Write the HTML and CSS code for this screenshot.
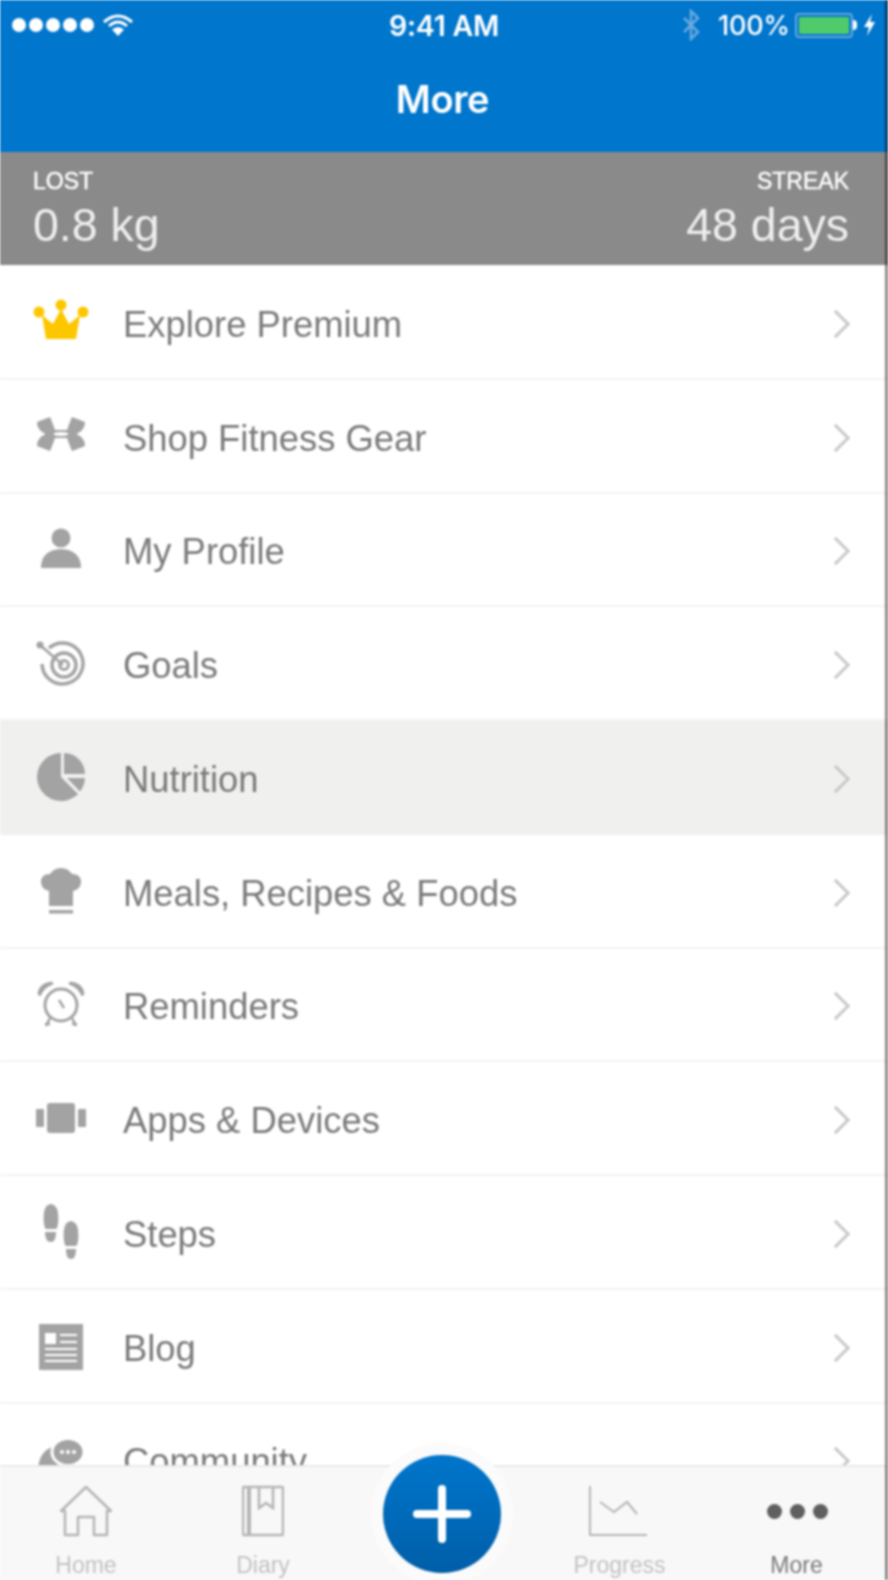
FILE: index.html
```html
<!DOCTYPE html>
<html lang="en">
<head>
<meta charset="utf-8">
<title>More</title>
<link rel="stylesheet" href="styles.css">
</head>
<body>
<div class="app">
  <header class="top">
    <div class="status">
      <div class="status-left">
        <span class="signal"><i></i><i></i><i></i><i></i><i></i></span>
        <svg class="wifi" viewBox="0 0 30 22" width="30" height="22"><path d="M1 8 Q15 -4 29 8" fill="none" stroke="#fff" stroke-width="3"/><path d="M6 12 Q15 4 24 12" fill="none" stroke="#fff" stroke-width="3"/><path d="M15 22 L9 15.5 Q15 10.5 21 15.5Z" fill="#fff"/></svg>
      </div>
      <div class="clock">9:41 AM</div>
      <div class="status-right">
        <svg class="bt" viewBox="0 0 20 32" width="20" height="32"><path d="M3 9 L17 23 L10 30 V2 L17 9 L3 23" fill="none" stroke="#6aa9df" stroke-width="2.5"/></svg>
        <span class="pct">100%</span>
        <span class="battery"><span class="battery-fill"></span></span>
        <span class="battery-nub"></span>
        <svg class="bolt" viewBox="0 0 13 22" width="13" height="22"><path d="M9 0 L1 13 H6 L4 22 L12 8 H7Z" fill="#fff"/></svg>
      </div>
    </div>
    <h1 class="title">More</h1>
  </header>

  <section class="stats">
    <div class="stat">
      <div class="stat-label">LOST</div>
      <div class="stat-value">0.8 kg</div>
    </div>
    <div class="stat stat-right">
      <div class="stat-label">STREAK</div>
      <div class="stat-value">48 days</div>
    </div>
  </section>

  <main class="list">
    <a class="row">
      <span class="ico ico-up2"><svg viewBox="0 0 56 42" width="56" height="42"><path d="M9 16 L13 40 H43 L47 16 L36 25 L28 10 L20 25Z" fill="#fdc700"/><circle cx="6" cy="13" r="5.5" fill="#fdc700"/><circle cx="28" cy="6" r="5.5" fill="#fdc700"/><circle cx="50" cy="13" r="5.5" fill="#fdc700"/></svg></span>
      <span class="label">Explore Premium</span><span class="chev"></span>
    </a>
    <a class="row">
      <span class="ico ico-up2"><svg viewBox="0 0 52 34" width="52" height="34"><path d="M2 5 L15 0 Q18 7 20 13 H32 Q34 7 37 0 L50 5 Q50 11 45 15 Q42 16 42 17 Q42 18 45 19 Q50 23 50 29 L37 34 Q34 27 32 21 H20 Q18 27 15 34 L2 29 Q2 23 7 19 Q10 18 10 17 Q10 16 7 15 Q2 11 2 5Z" fill="#a3a3a3"/><path d="M19 16 Q26 14 33 16 V18 Q26 20 19 18Z" fill="#fff"/></svg></span>
      <span class="label">Shop Fitness Gear</span><span class="chev"></span>
    </a>
    <a class="row">
      <span class="ico ico-up1"><svg viewBox="0 0 40 40" width="40" height="40"><circle cx="20" cy="10" r="9.5" fill="#a3a3a3"/><path d="M0 40 Q0 22 20 21 Q40 22 40 40Z" fill="#a3a3a3"/></svg></span>
      <span class="label">My Profile</span><span class="chev"></span>
    </a>
    <a class="row">
      <span class="ico ico-down1"><svg viewBox="0 0 50 46" width="50" height="46" fill="none" stroke="#a3a3a3"><path d="M13 7 A20.5 20.5 0 1 1 6 23" stroke-width="3.5"/><circle cx="28" cy="24" r="12" stroke-width="3.5"/><circle cx="28" cy="24" r="4.5" stroke-width="3"/><path d="M4 4 L27 24" stroke-width="2.5"/><circle cx="4" cy="4" r="3.5" fill="#a3a3a3" stroke="none"/></svg></span>
      <span class="label">Goals</span><span class="chev"></span>
    </a>
    <a class="row row-active">
      <span class="ico"><svg viewBox="0 0 48 48" width="48" height="48" fill="#a3a3a3"><path d="M24 0 A24 24 0 1 0 41 41 L24 24Z"/><path d="M27 0 A21 21 0 0 1 48 21 H27Z"/><path d="M48 25 A24 24 0 0 1 43 38.5 L30 25Z"/></svg></span>
      <span class="label">Nutrition</span><span class="chev"></span>
    </a>
    <a class="row">
      <span class="ico"><svg viewBox="0 0 40 46" width="40" height="46" fill="#a3a3a3"><path d="M8 38 V23 Q0 21 0 14 Q0 6 9 6 Q13 0 20 0 Q27 0 31 6 Q40 6 40 14 Q40 21 32 23 V38Z"/><rect x="8" y="42" width="24" height="3.5"/></svg></span>
      <span class="label">Meals, Recipes &amp; Foods</span><span class="chev"></span>
    </a>
    <a class="row">
      <span class="ico"><svg viewBox="0 0 48 46" width="48" height="46"><path d="M1 13 Q2 2 15 1 L16 3 Q7 6 3 15Z" fill="#a3a3a3" stroke="#a3a3a3"/><path d="M47 13 Q46 2 33 1 L32 3 Q41 6 45 15Z" fill="#a3a3a3" stroke="#a3a3a3"/><circle cx="24" cy="24" r="16" fill="none" stroke="#a3a3a3" stroke-width="3"/><path d="M22 19 L27 27" stroke="#a3a3a3" stroke-width="2.5"/><path d="M13 37 L9 45 M35 37 L39 45 M8 43 H13 M35 43 H40" stroke="#a3a3a3" stroke-width="2.5" fill="none"/></svg></span>
      <span class="label">Reminders</span><span class="chev"></span>
    </a>
    <a class="row">
      <span class="ico"><svg viewBox="0 0 50 30" width="50" height="30" fill="#a3a3a3"><rect x="0" y="6" width="8" height="18" rx="1"/><rect x="11" y="0" width="28" height="30" rx="3"/><rect x="42" y="6" width="8" height="18" rx="1"/></svg></span>
      <span class="label">Apps &amp; Devices</span><span class="chev"></span>
    </a>
    <a class="row">
      <span class="ico"><svg viewBox="0 0 36 56" width="36" height="56" fill="#a3a3a3"><path d="M1 20 Q-1 1 8 0 Q17 1 15 20 Q14 25 13 25 H3 Q2 25 1 20Z"/><path d="M2 28 H13 Q13 38 8 38 Q2 38 2 28Z"/><path d="M21 37 Q19 18 28 17 Q37 18 35 37 Q34 42 33 42 H23 Q22 42 21 37Z"/><path d="M23 45 H33 Q33 55 28 55 Q23 55 23 45Z"/></svg></span>
      <span class="label">Steps</span><span class="chev"></span>
    </a>
    <a class="row">
      <span class="ico ico-down1"><svg viewBox="0 0 44 46" width="44" height="46"><rect width="44" height="46" fill="#a3a3a3"/><rect x="6" y="9" width="11" height="11" fill="#fff"/><path d="M21 11 H38 M21 18 H38 M6 25 H38 M6 31 H38 M6 37 H38" stroke="#fff" stroke-width="2"/></svg></span>
      <span class="label">Blog</span><span class="chev"></span>
    </a>
    <a class="row">
      <span class="ico ico-down2"><svg viewBox="0 0 46 46" width="46" height="46"><path d="M0 30 Q2 11 18 8 H28 V36 H0Z" fill="#a3a3a3"/><ellipse cx="30" cy="14" rx="16" ry="13.5" fill="#a3a3a3" stroke="#fff" stroke-width="3"/><circle cx="24" cy="14" r="2" fill="#fff"/><circle cx="30" cy="14" r="2" fill="#fff"/><circle cx="36" cy="14" r="2" fill="#fff"/></svg></span>
      <span class="label">Community</span><span class="chev"></span>
    </a>
  </main>

  <nav class="tabs">
    <div class="tab">
      <svg viewBox="0 0 52 52" width="52" height="52" fill="none" stroke="#b5b5b5" stroke-width="2.5" stroke-linejoin="round"><path d="M5 50 H18 V32 H34 V50 H47 V26 H51 L26 2 L1 26 H5Z"/></svg>
      <span class="tab-label">Home</span>
    </div>
    <div class="tab">
      <svg viewBox="0 0 42 52" width="42" height="52" fill="none" stroke="#b5b5b5" stroke-width="2.5"><rect x="1" y="2" width="40" height="48" rx="1"/><path d="M7 2 V50" stroke-width="4"/><path d="M17 2 V23 L24 18 L31 23 V2"/></svg>
      <span class="tab-label">Diary</span>
    </div>
    <div class="tab tab-spacer"></div>
    <div class="tab">
      <svg class="chart" viewBox="0 0 58 52" width="58" height="52" fill="none" stroke="#b5b5b5" stroke-width="2"><path d="M1 1 V50 H58"/><path d="M11 17 L25 27 L38 17 L48 29"/></svg>
      <span class="tab-label">Progress</span>
    </div>
    <div class="tab">
      <span class="dots"><i></i><i></i><i></i></span>
      <span class="tab-label tab-label-on">More</span>
    </div>
    <div class="add-ring"><div class="add"><span class="plus"></span></div></div>
  </nav>
</div>
</body>
</html>
```
FILE: styles.css
```css
* { box-sizing: border-box; }
html, body { margin: 0; padding: 0; background: #fff; }
body { width: 888px; height: 1580px; overflow: hidden; }

.app {
  position: relative;
  width: 888px;
  height: 1580px;
  display: flex;
  flex-direction: column;
  overflow: hidden;
  font-family: "Liberation Sans", Arial, sans-serif;
  filter: blur(0.8px);
}
.app::after { content: ""; position: absolute; top: 0; right: 0; bottom: 0; width: 3px; background: rgba(0, 0, 0, 0.45); }

.top { height: 152px; flex: none; background: #0076cc; color: #fff; display: flex; flex-direction: column; }
.status { height: 50px; display: grid; grid-template-columns: 1fr auto 1fr; align-items: center; padding: 0 12px 0 12px; }
.status-left { display: flex; align-items: center; gap: 9px; }
.signal { display: flex; gap: 3px; }
.signal i { width: 14px; height: 14px; border-radius: 50%; background: #fff; }
.clock { font-family: Inter, "Liberation Sans", sans-serif; font-size: 28.5px; font-weight: 600; letter-spacing: -0.2px; }
.status-right { display: flex; align-items: center; justify-content: flex-end; }
.bt { margin-right: 17px; }
.pct { font-family: Inter, "Liberation Sans", sans-serif; font-size: 27px; font-weight: 500; margin-right: 5px; letter-spacing: -0.2px; }
.battery { width: 58px; height: 25px; border: 2px solid #65a9e0; border-radius: 4px; padding: 2px; display: flex; }
.battery-fill { flex: 1; background: #4fcb6c; border-radius: 1px; }
.battery-nub { width: 4px; height: 10px; background: #fff; border-radius: 0 5px 5px 0; margin-right: 6px; }
.bolt { flex: none; }
.title { margin: 0; text-align: center; font-family: Inter, "Liberation Sans", sans-serif; font-size: 38px; font-weight: 600; line-height: 50px; padding: 24px 3px 0 0; letter-spacing: -0.4px; }

.stats { height: 113px; flex: none; background: #8a8a8a; color: #fff; display: flex; justify-content: space-between; padding: 16px 39px 0 33px; }
.stat-right { text-align: right; }
.stat-label { font-size: 23px; font-weight: 400; line-height: 26px; -webkit-text-stroke: 0.4px #fff; }
.stat-value { font-size: 46.5px; line-height: 63px; color: #eeeeee; }

.list { flex: 1; min-height: 0; overflow: hidden; background: #fff; padding-top: 1px; }
.row { height: 113.75px; display: flex; align-items: center; border-bottom: 2px solid #f3f3f3; color: #7a7a7a; }
.row-active { background: #f0f0ef; border-bottom-color: #f0f0ef; }
.ico { width: 123px; flex: none; display: flex; justify-content: center; padding-right: 2px; }
.ico svg { display: block; }
.ico-up2 { margin-top: -4px; }
.ico-up1 { margin-top: -2px; }
.ico-down1 { margin-top: 2px; }
.ico-down2 { margin-top: 4px; }
.label { flex: 1; font-size: 36.4px; padding-top: 6px; }
.chev { width: 20px; height: 20px; margin-right: 42px; margin-top: 4px; border-top: 3px solid #c9c9c9; border-right: 3px solid #c9c9c9; transform: rotate(45deg); }

.tabs {
  height: 115px;
  flex: none;
  position: relative;
  display: grid;
  grid-template-columns: 172px 182px 177px 177px 177px;
  background: #f8f8f8;
  border-top: 2px solid #e9e9e9;
  padding-top: 18px;
}
.tab { display: flex; flex-direction: column; align-items: center; }
.tab svg, .dots { height: 52px; flex: none; display: flex; align-items: center; }
.chart { margin-left: -4px; }
.dots { gap: 8px; margin-left: 2px; }
.dots i { width: 15px; height: 15px; border-radius: 50%; background: #5f5f5f; }
.tab-label { margin-top: 16px; font-size: 23px; line-height: 24px; color: #c2c2c2; }
.tab-label-on { color: #7a7a7a; }

.add-ring {
  position: absolute;
  left: 371px;
  top: -24px;
  width: 142px;
  height: 142px;
  border-radius: 50%;
  background: #fbfbfb;
  display: flex;
  align-items: center;
  justify-content: center;
}
.add { width: 118px; height: 118px; border-radius: 50%; background: linear-gradient(#0076cc, #005ea8); position: relative; }
.plus { position: absolute; left: 30px; top: 55px; width: 58px; height: 8px; border-radius: 4px; background: #fff; }
.plus::after { content: ""; position: absolute; left: 25px; top: -25px; width: 8px; height: 58px; border-radius: 4px; background: #fff; }
```
